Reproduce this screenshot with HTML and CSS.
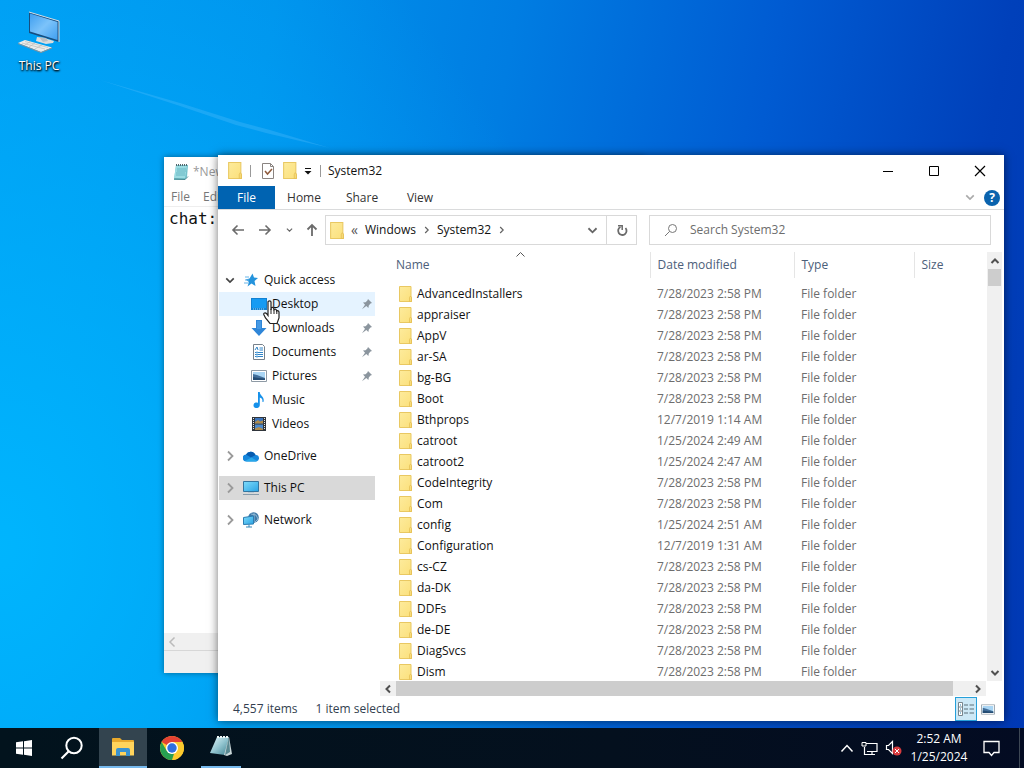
FILE: index.html
```html
<!DOCTYPE html>
<html lang="en">
<head>
<meta charset="utf-8">
<title>System32</title>
<link rel="stylesheet" href="styles.css">
</head>
<body>
<svg class="defs" aria-hidden="true">
  <defs>
    <linearGradient id="gFolder" x1="0" y1="0" x2="1" y2="1"><stop offset="0" stop-color="#fdeb9c"/><stop offset="1" stop-color="#fbe07c"/></linearGradient>
    <linearGradient id="gScreen" x1="0" y1="0" x2="1" y2="1"><stop offset="0" stop-color="#7fdcfb"/><stop offset="1" stop-color="#2aa3e4"/></linearGradient>
    <linearGradient id="gPc" x1="0" y1="0" x2="1" y2="1"><stop offset="0" stop-color="#3d9ef0"/><stop offset="0.5" stop-color="#7cc3fa"/><stop offset="1" stop-color="#3f9ff0"/></linearGradient>
    <linearGradient id="gNote" x1="0" y1="0" x2="1" y2="1"><stop offset="0" stop-color="#e6f8fa"/><stop offset="0.5" stop-color="#93c5d0"/><stop offset="1" stop-color="#3f8291"/></linearGradient>
    <symbol id="folder" viewBox="0 0 13 16">
      <path d="M.5.5h11.500v10.500l.5.5v4h-12z" fill="url(#gFolder)" stroke="#e9c862"/>
      <path d="M10.500 15.500v-4l1-1.500 1 1.500v4z" fill="#f7dc7c" stroke="#e4bd50" stroke-width=".7"/>
    </symbol>
    <symbol id="pin" viewBox="0 0 12 12">
      <path d="M7 1l4 4-1.500.6-1.700 1.800-.4 2.600L5.300 8 1 11.200 4 6.700 2 4.600l2.600-.4L6.400 2.500z" fill="#8b959e"/>
    </symbol>
    <symbol id="right" viewBox="0 0 10 12"><path d="M3 1.500l4.500 4.500L3 10.500" fill="none" stroke="currentColor" stroke-width="1.800"/></symbol>
    <symbol id="down" viewBox="0 0 12 10"><path d="M1.500 2.500L6 7l4.500-4.500" fill="none" stroke="currentColor" stroke-width="2"/></symbol>
    <symbol id="picture" viewBox="0 0 16 12">
      <path d="M.5.5h15v11h-15z" fill="#fff" stroke="#8e9aa5"/><path d="M2 2h12v8H2z" fill="#a9d5f4"/><path d="M2 4l4 1 8 3v2H2z" fill="#426f9b"/><path d="M2 7l6 1 6 .5V10H2z" fill="#244c73"/>
    </symbol>
  </defs>
</svg>
<div class="screen">
  <main class="desktop">
    <svg class="ray" viewBox="0 0 340 160" aria-hidden="true"><path d="M100 80l80 23 60 19 30 8 60 18-64-15-30-8-56-19z" fill="#6cc6ff" opacity=".25"/></svg>
    <button class="shortcut">
      <svg width="44" height="44" viewBox="0 0 44 44" aria-hidden="true">
        <path d="M12 2l30 9v21l-30-9z" fill="#174e80"/><path d="M13 3.500l27.500 8.500v18L13 21.500z" fill="url(#gPc)"/><path d="M12 2l30 9v21" fill="none" stroke="#d5dfe7"/>
        <path d="M20 27l7 1 10 3-1 2-7 1-10-3z" fill="#dcdcdc"/><path d="M22 27l7 1 2 3-5 1z" fill="#b9c0c6"/>
        <path d="M1 33l7-3 27 7.500-11 4.500z" fill="#ececea"/><path d="M5 33l23 6M8 31.500l23 6M12 37l6-4M18 39l7-4M8 35l6-4" stroke="#b5b5b2" stroke-width=".6"/><path d="M1 33l23 9 11-4.500v1L24 43 1 34z" fill="#879199"/>
      </svg>
      <span>This PC</span>
    </button>

    <section class="window notepad">
      <div class="note-title">
        <svg width="16" height="18" viewBox="0 0 16 18" aria-hidden="true"><path d="M3 2h12l-1 12-2 3H1z" fill="#73c1cb"/><path d="M3 3h11l-2 12H1z" fill="#9bdce2"/><path d="M4 6h9M4 8h9M3 10h9M3 12h9" stroke="#6bb8c4"/><path d="M3 2h12" stroke="#52676d" stroke-width="2" stroke-dasharray="1 1"/><path d="M1 16l11 .5 3-3" fill="none" stroke="#4c8990"/></svg>
        <span>*New</span>
      </div>
      <div class="note-menu"><button>File</button><button>Edit</button></div>
      <div class="note-body">chat:</div>
      <div class="note-scroll"><svg width="10" height="12" aria-hidden="true"><path d="M7.500 1.500L3 6l4.500 4.500" fill="none" stroke="#bbb" stroke-width="1.500"/></svg></div>
      <div class="note-status"></div>
    </section>

    <section class="window explorer">
      <header class="titlebar">
        <svg width="14" height="17"><use href="#folder"/></svg>
        <i class="rule"></i>
        <button class="tool check" aria-label="Properties"><svg width="12" height="16" viewBox="0 0 12 16"><path d="M.5.5h8l3 3v12H.5z" fill="#fff" stroke="#8a8481"/><path d="M8.500.5v3h3" fill="none" stroke="#8a8481"/><path d="M3 8l2.500 3L10 6" fill="none" stroke="#8f5b3d" stroke-width="1.500"/></svg></button>
        <button class="tool newf" aria-label="New folder"><svg width="14" height="17"><use href="#folder"/></svg></button>
        <button class="tool more" aria-label="Customize"><svg width="8" height="8" viewBox="0 0 8 8"><path d="M1 1.500h6" stroke="#111"/><path d="M.5 4h7L4 7.500z" fill="#111"/></svg></button>
        <i class="rule"></i>
        <h1>System32</h1>
        <div class="caption">
          <button aria-label="Minimize"><svg width="12" height="12"><path d="M1 6.500h10" stroke="#000"/></svg></button>
          <button aria-label="Maximize"><svg width="12" height="12"><path d="M1.500 1.500h9v9h-9z" fill="none" stroke="#000"/></svg></button>
          <button aria-label="Close"><svg width="12" height="12"><path d="M1 1l10 10M11 1L1 11" stroke="#000" stroke-width="1.200"/></svg></button>
        </div>
      </header>
      <nav class="ribbon">
        <button class="file">File</button><button>Home</button><button>Share</button><button>View</button>
        <div class="ribbon-end">
          <button aria-label="Expand"><svg class="faint" width="10" height="9" viewBox="0 0 12 10"><use href="#down"/></svg></button>
          <button class="help">?</button>
        </div>
      </nav>
      <div class="address-row">
        <div class="arrows">
          <button aria-label="Back"><svg width="14" height="12"><path d="M13 6H2M6.500 1.500L2 6l4.500 4.500" fill="none" stroke="#6b6b6b" stroke-width="1.600"/></svg></button>
          <button aria-label="Forward"><svg width="14" height="12"><path d="M1 6h11M7.500 1.500L12 6l-4.500 4.500" fill="none" stroke="#6b6b6b" stroke-width="1.600"/></svg></button>
          <button aria-label="Recent"><svg class="grey" width="7" height="6" viewBox="0 0 12 10"><use href="#down"/></svg></button>
          <button aria-label="Up"><svg width="12" height="14"><path d="M6 13V2M1.500 6.500L6 2l4.500 4.500" fill="none" stroke="#6b6b6b" stroke-width="1.800"/></svg></button>
        </div>
        <div class="address">
          <svg width="14" height="17"><use href="#folder"/></svg>
          <span class="laquo">«</span>
          <button>Windows</button>
          <svg class="grey" width="7" height="8" viewBox="0 0 10 12"><use href="#right"/></svg>
          <button>System32</button>
          <svg class="grey" width="7" height="8" viewBox="0 0 10 12"><use href="#right"/></svg>
          <button class="drop" aria-label="Previous locations"><svg class="grey" width="11" height="9" viewBox="0 0 12 10"><use href="#down"/></svg></button>
          <button class="refresh" aria-label="Refresh"><svg width="12" height="14" viewBox="0 0 12 14"><path d="M9.500 5A4.200 4.200 0 1 1 4.500 4" fill="none" stroke="#6b6b6b" stroke-width="1.800"/><path d="M2 2.800h4.200v4.200" fill="none" stroke="#6b6b6b" stroke-width="1.500"/></svg></button>
        </div>
        <label class="search">
          <svg width="14" height="14" aria-hidden="true"><circle cx="8.500" cy="5.500" r="4" fill="none" stroke="#777"/><path d="M5.500 8.500L1 13" stroke="#777"/></svg>
          <input type="text" placeholder="Search System32" aria-label="Search System32">
        </label>
      </div>
      <div class="body">
        <nav class="tree">
          <div class="group">
            <a href="#" class="top"><svg class="chev dark" width="10" height="9" viewBox="0 0 12 10"><use href="#down"/></svg><svg width="16" height="16" viewBox="0 0 16 16"><path d="M9.500 1.500l1.500 4 4 .5-3.500 3 1 5-4-2.500L4.500 14.500l1.500-4.500L2.500 7.500l4-1z" fill="#2493dc"/><path d="M2 5h4M1 11h5M2 8h4" stroke="#68b6ea" stroke-width="1.200"/></svg><span>Quick access</span></a>
            <a href="#" class="hover"><svg width="16" height="14" viewBox="0 0 16 14"><path d="M0 1h16v12H0z" fill="#1281d2"/><path d="M1 2h14v9H1z" fill="#169bf3"/><path d="M2 12h12" stroke="#9dd5f8" stroke-dasharray="1 1"/></svg><span>Desktop</span><svg class="pin" width="12" height="12"><use href="#pin"/></svg>
              <svg class="cursor" width="18" height="26" viewBox="0 0 18 26" aria-hidden="true"><path d="M5 2c0-1.500 3-1.500 3 0v8l.3-2c.5-1 2.200-.8 2.400.4l.3 1.200c.5-.9 2.100-.7 2.400.4l.3 1c.8-.6 2.300-.2 2.300 1.200V18l-2 5.500H7L2.500 18 .8 14.500c-.4-1.500 1.500-2.200 2.600-1L5 15.500z" fill="#fff" stroke="#222" stroke-width="1.200"/><path d="M8 9v5M11 9.500V14M13.800 10.500V14" stroke="#222"/></svg></a>
            <a href="#"><svg width="16" height="16" viewBox="0 0 16 16"><path d="M5 0h6v8h4.500L8 16 .5 8H5z" fill="#2f86d8"/><path d="M6 1h4v8H6z" fill="#57a7ec" opacity=".6"/></svg><span>Downloads</span><svg class="pin" width="12" height="12"><use href="#pin"/></svg></a>
            <a href="#"><svg width="16" height="16" viewBox="0 0 16 16"><path d="M2.500.5h9l2 2v13h-11z" fill="#fff" stroke="#76818b"/><path d="M4 6l2-3 1 3M8.500 4H12M8.500 6H12M4 8.500h8M4 10.500h8M4 12.500h8" fill="none" stroke="#3286c9"/><path d="M6 7v7" stroke="#8cc0e6"/></svg><span>Documents</span><svg class="pin" width="12" height="12"><use href="#pin"/></svg></a>
            <a href="#"><svg width="16" height="12"><use href="#picture"/></svg><span>Pictures</span><svg class="pin" width="12" height="12"><use href="#pin"/></svg></a>
            <a href="#"><svg width="16" height="16" viewBox="0 0 16 16"><path d="M7 0h1.800c0 4 5.200 4.500 3.600 10h-1c.5-3-1-4-2.600-4.500V13c0 4-6.300 4-6.300.4C2.500 10.500 5.500 10 7 11z" fill="#1691ea"/></svg><span>Music</span></a>
            <a href="#"><svg width="16" height="16" viewBox="0 0 16 16"><path d="M1 1h14v14H1z" fill="#30353b"/><path d="M4 2h8v5.500H4z" fill="#3c75bd"/><path d="M4 8.500h8V14H4z" fill="#4d8bcd"/><path d="M4 6l3-2 2 1.500 3-1v3H4zM4 12.500l4-1.500 4 2v1H4z" fill="#b08c4c"/><path d="M2.500 2v12M13.500 2v12" stroke="#e5e9ec" stroke-dasharray="1 1"/></svg><span>Videos</span></a>
          </div>
          <div class="group"><a href="#" class="top"><svg class="chev" width="10" height="12"><use href="#right"/></svg><svg width="16" height="12" viewBox="0 0 16 12"><path d="M3.500 11.500a3.500 3.500 0 0 1-.5-7A5.200 5.200 0 0 1 12.500 5a3.200 3.200 0 0 1 .5 6.500z" fill="#1687dc"/><path d="M3 4.500A5.200 5.200 0 0 1 12.500 5L8 7.500z" fill="#075baf"/><path d="M2 11l6.500-3.500 6 3.500-1.500.5h-9z" fill="#28a8ea"/></svg><span>OneDrive</span></a></div>
          <div class="group"><a href="#" class="top selected"><svg class="chev" width="10" height="12"><use href="#right"/></svg><svg width="16" height="16" viewBox="0 0 16 16"><path d="M.5 1.500h15v10H.5z" fill="url(#gScreen)" stroke="#34759f"/><path d="M0 14.500h16" stroke="#879baa"/><path d="M5 12.500h6" stroke="#b9c9d4"/></svg><span>This PC</span></a></div>
          <div class="group"><a href="#" class="top"><svg class="chev" width="10" height="12"><use href="#right"/></svg><svg width="16" height="16" viewBox="0 0 16 16"><circle cx="10.500" cy="5.500" r="5.300" fill="#3f79a7"/><path d="M8 2l5 1 2 4-3 3M11 1v9" fill="none" stroke="#8fb8d4"/><path d="M.5 5.500l10-1.500v8l-10 .5z" fill="url(#gScreen)" stroke="#2b7db2"/><path d="M3 15h6M6 12.500V15" stroke="#3587b9"/></svg><span>Network</span></a></div>
        </nav>
        <div class="files">
          <div class="listing">
            <svg class="sort" width="9" height="5" aria-hidden="true"><path d="M.5 4.500l4-4 4 4" fill="none" stroke="#555"/></svg>
            <table>
              <colgroup><col class="c-name"><col class="c-date"><col class="c-type"><col></colgroup>
              <thead><tr><th>Name</th><th>Date modified</th><th>Type</th><th>Size</th></tr></thead>
              <tbody>
                <tr><td><svg><use href="#folder"/></svg>AdvancedInstallers</td><td>7/28/2023 2:58 PM</td><td>File folder</td><td></td></tr>
                <tr><td><svg><use href="#folder"/></svg>appraiser</td><td>7/28/2023 2:58 PM</td><td>File folder</td><td></td></tr>
                <tr><td><svg><use href="#folder"/></svg>AppV</td><td>7/28/2023 2:58 PM</td><td>File folder</td><td></td></tr>
                <tr><td><svg><use href="#folder"/></svg>ar-SA</td><td>7/28/2023 2:58 PM</td><td>File folder</td><td></td></tr>
                <tr><td><svg><use href="#folder"/></svg>bg-BG</td><td>7/28/2023 2:58 PM</td><td>File folder</td><td></td></tr>
                <tr><td><svg><use href="#folder"/></svg>Boot</td><td>7/28/2023 2:58 PM</td><td>File folder</td><td></td></tr>
                <tr><td><svg><use href="#folder"/></svg>Bthprops</td><td>12/7/2019 1:14 AM</td><td>File folder</td><td></td></tr>
                <tr><td><svg><use href="#folder"/></svg>catroot</td><td>1/25/2024 2:49 AM</td><td>File folder</td><td></td></tr>
                <tr><td><svg><use href="#folder"/></svg>catroot2</td><td>1/25/2024 2:47 AM</td><td>File folder</td><td></td></tr>
                <tr><td><svg><use href="#folder"/></svg>CodeIntegrity</td><td>7/28/2023 2:58 PM</td><td>File folder</td><td></td></tr>
                <tr><td><svg><use href="#folder"/></svg>Com</td><td>7/28/2023 2:58 PM</td><td>File folder</td><td></td></tr>
                <tr><td><svg><use href="#folder"/></svg>config</td><td>1/25/2024 2:51 AM</td><td>File folder</td><td></td></tr>
                <tr><td><svg><use href="#folder"/></svg>Configuration</td><td>12/7/2019 1:31 AM</td><td>File folder</td><td></td></tr>
                <tr><td><svg><use href="#folder"/></svg>cs-CZ</td><td>7/28/2023 2:58 PM</td><td>File folder</td><td></td></tr>
                <tr><td><svg><use href="#folder"/></svg>da-DK</td><td>7/28/2023 2:58 PM</td><td>File folder</td><td></td></tr>
                <tr><td><svg><use href="#folder"/></svg>DDFs</td><td>7/28/2023 2:58 PM</td><td>File folder</td><td></td></tr>
                <tr><td><svg><use href="#folder"/></svg>de-DE</td><td>7/28/2023 2:58 PM</td><td>File folder</td><td></td></tr>
                <tr><td><svg><use href="#folder"/></svg>DiagSvcs</td><td>7/28/2023 2:58 PM</td><td>File folder</td><td></td></tr>
                <tr><td><svg><use href="#folder"/></svg>Dism</td><td>7/28/2023 2:58 PM</td><td>File folder</td><td></td></tr>
              </tbody>
            </table>
          </div>
          <div class="vscroll">
            <button aria-label="Scroll up"><svg width="10" height="8"><path d="M1.500 6L5 2.500 8.500 6" fill="none" stroke="#505050" stroke-width="2"/></svg></button>
            <div class="thumb"></div>
            <button class="end" aria-label="Scroll down"><svg width="10" height="8"><path d="M1.500 2L5 5.500 8.500 2" fill="none" stroke="#505050" stroke-width="2"/></svg></button>
          </div>
          <div class="hscroll">
            <button aria-label="Scroll left"><svg width="8" height="10"><path d="M6 1.500L2.500 5 6 8.500" fill="none" stroke="#505050" stroke-width="2"/></svg></button>
            <div class="track"><div class="thumb"></div></div>
            <button aria-label="Scroll right"><svg width="8" height="10"><path d="M2 1.500L5.500 5 2 8.500" fill="none" stroke="#505050" stroke-width="2"/></svg></button>
          </div>
        </div>
      </div>
      <footer class="status">
        <span>4,557 items</span><span>1 item selected</span>
        <div class="views">
          <button class="on" aria-label="Details"><svg width="18" height="14" viewBox="0 0 18 14"><path d="M1.500.5h4v13h-4zM1.500 5h4M1.500 9h4" fill="#fff" stroke="#77858d"/><path d="M3 3h1M3 7h1M3 11h1" stroke="#267da5"/><path d="M7 3h4M12.500 3H17M7 7h4M12.500 7H17M7 11h4M12.500 11H17" stroke="#5b6f79"/></svg></button>
          <button aria-label="Large icons"><svg width="14" height="11" viewBox="0 0 16 12"><use href="#picture"/></svg></button>
        </div>
      </footer>
    </section>
  </main>

  <footer class="taskbar">
    <button aria-label="Start"><svg width="16" height="16" viewBox="0 0 16 16"><path d="M0 2.300l7-1V7.500H0zM8 1.200L16 0v7.500H8zM0 8.500h7v6.200l-7-1zM8 8.500h8V16l-8-1.200z" fill="#fff"/></svg></button>
    <button aria-label="Search"><svg width="24" height="24" viewBox="0 0 24 24"><circle cx="14" cy="9.500" r="7.700" fill="none" stroke="#fff" stroke-width="2"/><path d="M8.500 15.500L1.500 22.500" stroke="#fff" stroke-width="2.200"/></svg></button>
    <button class="active" aria-label="File Explorer"><svg width="22" height="20" viewBox="0 0 22 20"><path d="M0 2q0-1 1-1h7l2 2h11q1 0 1 1v14H0z" fill="#e8a92c"/><path d="M0 5h22v13.500H0z" fill="#ffd45c"/><path d="M4 19v-6q0-2 2-2h10q2 0 2 2v6h-4v-4H8v4z" fill="#3a93d0"/></svg></button>
    <button aria-label="Chrome"><svg width="24" height="24" viewBox="0 0 24 24"><circle cx="12" cy="12" r="12" fill="#fcca2e"/><path d="M12 12L1.610 6A12 12 0 0 1 22.390 6z" fill="#e34133"/><path d="M12 6h10.390A12 12 0 0 1 12 24l5.200-9z" fill="#fcca2e"/><path d="M1.610 6l5.190 9 5.200 3 2-.3L12 24A12 12 0 0 1 1.610 6z" fill="#279f51"/><circle cx="12" cy="12" r="6" fill="#fff"/><circle cx="12" cy="12" r="4.700" fill="#2f6fe0"/></svg></button>
    <button class="running" aria-label="Notepad"><svg width="22" height="22" viewBox="0 0 22 22"><path d="M7 1h12l-4 18L0 17z" fill="url(#gNote)"/><path d="M19 1l3 17-5 2-3-1z" fill="#c9d6d8"/><path d="M19 1l-4 18 5-3z" fill="#5a8992"/><path d="M7 1h12" stroke="#f1f8f8" stroke-width="2" stroke-dasharray="2 1"/></svg></button>
    <div class="tray">
      <button aria-label="Hidden icons"><svg width="14" height="9"><path d="M1.500 7.500l5.500-6 5.500 6" fill="none" stroke="#fff" stroke-width="1.500"/></svg></button>
      <button aria-label="Network"><svg width="17" height="15"><path d="M5 2.500h11v8H6M3.500 6v7.500H8M11 10.500v3M8 13.500h6" fill="none" stroke="#fff" stroke-width="1.200"/><path d="M1 1.500h4v3.500H1z" fill="#111b27" stroke="#fff"/></svg></button>
      <button aria-label="Volume"><svg width="17" height="16"><path d="M1.500 5.500h2l4-4v12l-4-4h-2z" fill="none" stroke="#fff" stroke-width="1.200"/><circle cx="12" cy="11" r="4.500" fill="#d83b3e"/><path d="M10 9l4 4M14 9l-4 4" stroke="#fff"/></svg></button>
      <div class="clock"><time>2:52 AM</time><time>1/25/2024</time></div>
      <button aria-label="Notifications"><svg width="17" height="17"><path d="M1 1.500h15v11h-5l-2.500 3-2.500-3H1z" fill="none" stroke="#fff" stroke-width="1.300"/></svg></button>
      <i class="peek"></i>
    </div>
  </footer>
</div>
</body>
</html>
```
FILE: styles.css
```css
* { box-sizing: border-box; }
body { margin: 0; font: 12px/16px "Open Sans", "Noto Sans", sans-serif; color: #111; }
button { padding: 0; border: 0; background: none; font: inherit; color: inherit; display: flex; align-items: center; justify-content: center; }
a { color: inherit; text-decoration: none; }
svg { display: block; flex: none; }
.defs { position: absolute; width: 0; height: 0; }

.screen { height: 100vh; display: flex; flex-direction: column; overflow: hidden; }
.desktop {
  flex: 1; min-height: 0; position: relative; overflow: hidden;
  background:
    radial-gradient(ellipse 60% 100% at 0% 75%, rgba(0, 184, 255, 0.9), rgba(0, 160, 250, 0) 100%),
    linear-gradient(100deg, #009af2 0%, #0092ec 24%, #007de2 45%, #005bd2 68%, #0040ba 88%, #0038b4 100%);
}
.ray { position: absolute; left: 0; top: 0; width: 340px; height: 160px; }
.shortcut { position: absolute; left: 2px; top: 10px; width: 74px; flex-direction: column; gap: 4px; color: #fff; text-shadow: 0 1px 2px #000, 1px 1px 2px #000; }

.window { position: absolute; background: #fff; display: flex; flex-direction: column; }
.notepad { left: 164px; top: 157px; width: 480px; bottom: 55px; box-shadow: 0 0 6px rgba(0, 0, 0, 0.4); color: #777; }
.note-title { height: 30px; display: flex; align-items: center; gap: 4px; padding-left: 9px; color: #999; }
.note-menu { height: 20px; display: flex; gap: 13px; padding-left: 7px; border-bottom: 1px solid #eee; }
.note-body { flex: 1; padding: 2px 5px; font: 16px/20px "DejaVu Sans Mono", monospace; color: #111; }
.note-scroll { height: 17px; background: #f0f0f0; display: flex; align-items: center; padding-left: 3px; }
.note-status { height: 23px; background: #f0f0f0; border-top: 1px solid #d7d7d7; }

.explorer { left: 218px; top: 155px; right: 20px; bottom: 7px; box-shadow: 0 0 9px rgba(0, 0, 0, 0.55); }
.titlebar { height: 31px; display: flex; align-items: center; padding: 0 1px 0 10px; }
.titlebar h1 { margin: 0 auto 0 7px; font-size: 12px; font-weight: 400; }
.rule { width: 1px; height: 12px; background: #999; margin-left: 8px; }
.check { margin-left: 11px; }
.newf { margin-left: 9px; }
.more { margin-left: 7px; }
.caption { display: flex; align-self: stretch; }
.caption button { width: 46px; }
.ribbon { height: 24px; display: flex; border-bottom: 1px solid #dadbdc; color: #333; }
.ribbon > button { width: 58px; }
.ribbon > .file { width: 57px; background: #0063b1; color: #fff; }
.ribbon-end { margin-left: auto; display: flex; align-items: center; gap: 9px; padding-right: 4px; }
.help { width: 16px; height: 16px; border-radius: 50%; background: #0a63ae; color: #fff; font-weight: 700; }
.faint { color: #aaa; }
.grey { color: #666; }
.address-row { padding: 5px 13px 7px; display: grid; grid-template-columns: 94px minmax(0, 312fr) minmax(0, 354fr); grid-auto-rows: 30px; }
.arrows { display: flex; align-items: center; justify-content: space-between; padding-right: 7px; }
.address { display: flex; align-items: center; border: 1px solid #d9d9d9; padding-left: 4px; gap: 7px; }
.laquo { font-size: 14px; color: #555; }
.drop { margin-left: auto; width: 14px; }
.refresh { align-self: stretch; width: 30px; border-left: 1px solid #d9d9d9; }
.search { margin-left: 12px; border: 1px solid #d9d9d9; display: flex; align-items: center; gap: 12px; padding-left: 14px; }
.search input { flex: 1; min-width: 0; border: 0; padding: 0; outline: 0; font: inherit; background: none; }
.search input::placeholder { color: #6d6d6d; opacity: 1; }

.body { flex: 1; min-height: 0; display: flex; }
.tree { width: 162px; padding: 16px 5px 0 1px; }
.group { margin-bottom: 8px; }
.tree a { position: relative; height: 24px; display: flex; align-items: center; gap: 5px; padding-left: 32px; padding-right: 2px; }
.tree a.top { padding-left: 6px; }
.chev { color: #9a9a9a; margin-right: 3px; }
.chev.dark { color: #444; }
.pin { margin-left: auto; }
.hover { background: #e5f3ff; }
.selected { background: #d9d9d9; }
.cursor { position: absolute; left: 44px; top: 8px; z-index: 2; }

.files { flex: 1; min-width: 0; display: grid; grid-template: minmax(0, 1fr) 15px / minmax(0, 1fr) 17px; margin-bottom: 1px; }
.listing { position: relative; overflow: hidden; }
.sort { position: absolute; left: 136px; top: 0; }
table { width: 100%; table-layout: fixed; border-collapse: collapse; }
.c-name { width: 270px; }
.c-date { width: 144px; }
.c-type { width: 120px; }
th { height: 26px; padding: 0 0 0 7px; border-left: 1px solid #e5e5e5; text-align: left; font-weight: 400; color: #4c607a; }
th:first-child { padding-left: 16px; border: 0; }
tbody::before { content: ""; display: block; height: 5px; }
td { height: 21px; padding: 0 0 0 7px; color: #6d6d6d; white-space: nowrap; }
td:first-child { padding-left: 19px; color: #111; }
td svg { width: 13px; height: 16px; float: left; margin-right: 5px; }
.vscroll { width: 15px; background: #f0f0f0; display: flex; flex-direction: column; }
.vscroll button { height: 17px; }
.vscroll .thumb { height: 17px; margin: 0 1px; background: #cdcdcd; }
.vscroll .end { margin-top: auto; }
.hscroll { display: flex; background: #f0f0f0; margin-right: 1px; }
.hscroll button { width: 16px; }
.track { flex: 1; }
.track .thumb { width: 97%; height: 100%; background: #cdcdcd; }
.status { height: 24px; display: flex; align-items: center; gap: 18px; padding: 0 5px 0 15px; color: #333f50; }
.views { margin-left: auto; display: flex; align-self: stretch; }
.views button { width: 22px; }
.views .on { background: #cce8f6; border: 1px solid #26a0da; }

.taskbar { height: 40px; display: flex; color: #fff; background: linear-gradient(90deg, #02131d, #04101e 60%, #030b22); }
.taskbar > button { width: 48px; }
.taskbar > .active { margin-left: 3px; background: #33444f; border-bottom: 2px solid #76b9ed; }
.taskbar > .active + button { margin-left: 1px; }
.taskbar > .running { width: 40px; margin-left: 5px; border-bottom: 2px solid #76b9ed; }
.tray { margin-left: auto; display: flex; align-items: center; gap: 7px; }
.clock { width: 60px; display: flex; flex-direction: column; align-items: center; line-height: 18px; margin-right: 7px; }
.peek { align-self: stretch; width: 5px; margin-left: 12px; border-left: 1px solid #3d4754; }
```
